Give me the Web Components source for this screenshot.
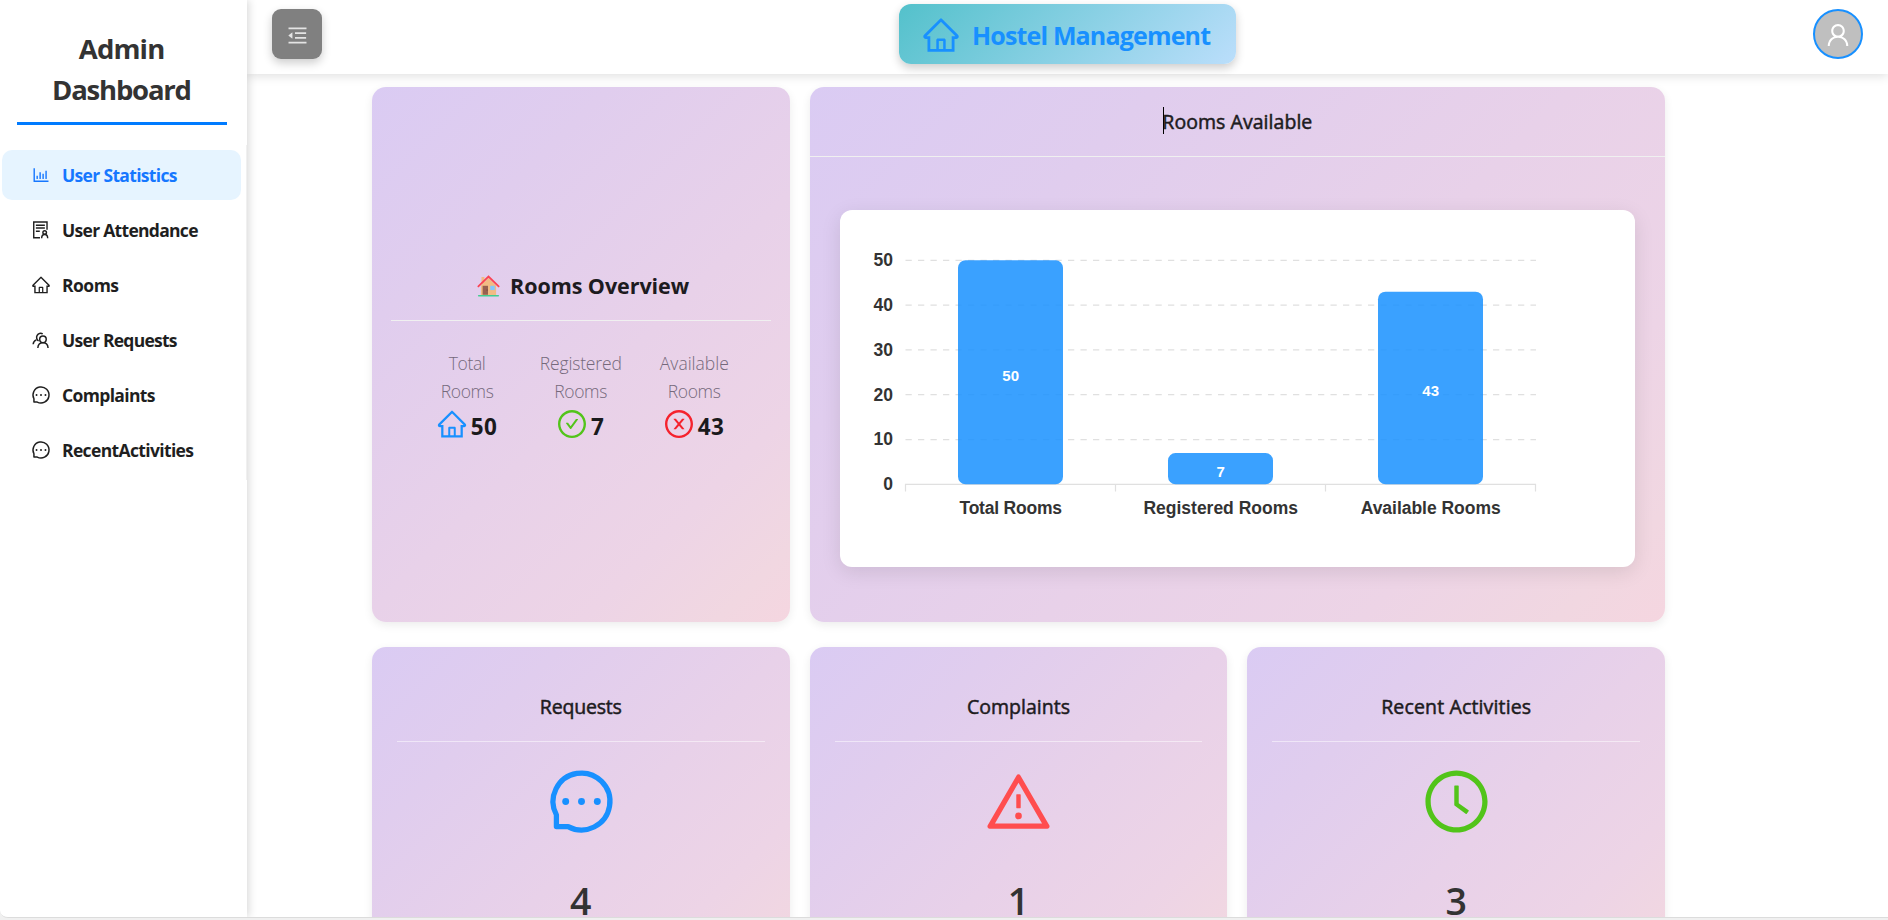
<!DOCTYPE html>
<html lang="en">
<head>
<meta charset="utf-8">
<title>Hostel Management</title>
<style>
html,body{margin:0;height:100%;overflow:hidden;background:#fff}
body{font-family:"Open Sans","Noto Sans",sans-serif;color:#1d1b20}
</style>
</head>
<body>
<hostel-app></hostel-app>
<script>
const ring='<path d="M512 64C264.6 64 64 264.6 64 512s200.6 448 448 448 448-200.6 448-448S759.4 64 512 64zm0 820c-205.4 0-372-166.6-372-372s166.6-372 372-372 372 166.6 372 372-166.6 372-372 372z"/>';
const ICONS={
home:'<path d="M946.5 505L560.1 118.8l-25.9-25.9a31.5 31.5 0 00-44.4 0L77.5 505a63.9 63.9 0 00-18.8 46c.4 35.2 29.7 63.3 64.9 63.3h42.5V940h691.8V614.3h43.4c17.1 0 33.2-6.7 45.3-18.8a63.6 63.6 0 0018.7-45.3c0-17-6.7-33.1-18.8-45.2zM568 868H456V664h112v204zm217.9-325.7V868H632V640c0-22.1-17.9-40-40-40H432c-22.1 0-40 17.9-40 40v228H238.1V542.3h-96l370-369.7 23.1 23.1L882 542.3h-96.1z"/>',
bars:'<path d="M888 792H200V168c0-4.4-3.6-8-8-8h-56c-4.4 0-8 3.6-8 8v688c0 4.4 3.6 8 8 8h752c4.4 0 8-3.6 8-8v-56c0-4.4-3.6-8-8-8zm-600-80h56c4.4 0 8-3.6 8-8V560c0-4.4-3.6-8-8-8h-56c-4.4 0-8 3.6-8 8v144c0 4.4 3.6 8 8 8zm152 0h56c4.4 0 8-3.6 8-8V384c0-4.4-3.6-8-8-8h-56c-4.4 0-8 3.6-8 8v320c0 4.4 3.6 8 8 8zm152 0h56c4.4 0 8-3.6 8-8V462c0-4.4-3.6-8-8-8h-56c-4.4 0-8 3.6-8 8v242c0 4.4 3.6 8 8 8zm152 0h56c4.4 0 8-3.6 8-8V304c0-4.4-3.6-8-8-8h-56c-4.4 0-8 3.6-8 8v400c0 4.4 3.6 8 8 8z"/>',
user:'<path d="M858.5 763.6a374 374 0 00-80.6-119.5 375.63 375.63 0 00-119.5-80.6c-.4-.2-.8-.3-1.2-.5C719.5 518 760 444.7 760 362c0-137-111-248-248-248S264 225 264 362c0 82.7 40.5 156 102.8 201.1-.4.2-.8.3-1.2.5-44.8 18.9-85 46-119.5 80.6a375.63 375.63 0 00-80.6 119.5A371.7 371.7 0 00136 901.8a8 8 0 008 8.2h60c4.4 0 7.9-3.5 8-7.8 2-77.2 33-149.5 87.8-204.3 56.7-56.7 132-87.9 212.2-87.9s155.5 31.2 212.2 87.9C779 752.7 810 825 812 902.2c.1 4.4 3.6 7.8 8 7.8h60a8 8 0 008-8.2c-1-47.8-10.9-94.3-29.5-138.2zM512 534c-45.9 0-89.1-17.9-121.6-50.4S340 407.9 340 362c0-45.9 17.9-89.1 50.4-121.6S466.1 190 512 190s89.1 17.9 121.6 50.4S684 316.1 684 362c0 45.9-17.9 89.1-50.4 121.6S557.9 534 512 534z"/>',
message:'<path fill="none" stroke="currentColor" stroke-width="76" stroke-linejoin="round" d="M150 705V874H319A410 410 0 1 0 150 705z"/><circle cx="284" cy="512" r="50"/><circle cx="512" cy="512" r="50"/><circle cx="740" cy="512" r="50"/>',
warning:'<path d="M464 720a48 48 0 1096 0 48 48 0 10-96 0zm16-304v184c0 4.4 3.6 8 8 8h48c4.4 0 8-3.6 8-8V416c0-4.4-3.6-8-8-8h-48c-4.4 0-8 3.6-8 8zm475.7 440l-416-720c-6.2-10.7-16.9-16-27.7-16s-21.6 5.3-27.7 16l-416 720C56 877.4 71.4 904 96 904h832c24.6 0 40-26.6 27.7-48zm-783.5-27.9L512 239.9l339.8 588.2H172.2z"/>',
clock:ring+'<path d="M686.7 638.6L544.1 535.5V288c0-4.4-3.6-8-8-8H488c-4.4 0-8 3.6-8 8v275.4c0 2.6 1.2 5 3.3 6.5l165.4 120.6c3.6 2.6 8.6 1.8 11.2-1.7l28.6-39c2.6-3.7 1.8-8.7-1.8-11.2z"/>',
check:ring+'<path d="M699 353h-46.9c-10.2 0-19.9 4.9-25.9 13.3L469 584.3l-71.2-98.8c-6-8.3-15.6-13.3-25.9-13.3H325c-6.5 0-10.3 7.4-6.5 12.7l124.6 172.8a31.8 31.8 0 0051.7 0l210.6-292c3.9-5.3.1-12.7-6.4-12.7z"/>',
close:ring+'<path d="M685.4 354.8c0-4.4-3.6-8-8-8l-66 .3L512 465.6l-99.3-118.4-66.1-.3c-4.4 0-8 3.5-8 8 0 1.9.7 3.7 1.9 5.2l130.1 155L340.5 670a8.32 8.32 0 00-1.9 5.2c0 4.4 3.6 8 8 8l66.1-.3L512 564.4l99.3 118.4 66 .3c4.4 0 8-3.5 8-8 0-1.9-.7-3.7-1.9-5.2L553.5 515l130.1-155c1.2-1.4 1.8-3.3 1.8-5.2z"/>',
fold:'<path d="M408 442h480c4.4 0 8-3.6 8-8v-56c0-4.4-3.6-8-8-8H408c-4.4 0-8 3.6-8 8v56c0 4.4 3.6 8 8 8zm-8 204c0 4.4 3.6 8 8 8h480c4.4 0 8-3.6 8-8v-56c0-4.4-3.6-8-8-8H408c-4.4 0-8 3.6-8 8v56zm504-486H120c-4.4 0-8 3.6-8 8v56c0 4.4 3.6 8 8 8h784c4.4 0 8-3.6 8-8v-56c0-4.4-3.6-8-8-8zm0 632H120c-4.4 0-8 3.6-8 8v56c0 4.4 3.6 8 8 8h784c4.4 0 8-3.6 8-8v-56c0-4.4-3.6-8-8-8zM115.4 518.9L271.7 642c5.8 4.6 14.4.5 14.4-6.9V388.9c0-7.4-8.5-11.5-14.4-6.9L115.4 505.1a8.74 8.74 0 000 13.8z"/>',
audit:'<g fill="none" stroke="currentColor" stroke-width="72"><path d="M460 912H140V100H820V500M250 270H710M250 412H710M250 575H450"/><circle cx="700" cy="640" r="92"/><path d="M546 930C546 680 854 680 854 930"/></g>',
team:'<g fill="none" stroke="currentColor" stroke-width="76"><circle cx="612" cy="478" r="168"/><path d="M350 920C372 570 852 570 874 920M390 560A180 180 0 1 1 600 200M110 730C120 610 180 540 270 505"/></g>',
house:'<path fill="#f2bb84" d="M200 90h130v300H200zM512 130L850 470V900H174V470z"/><path fill="#986050" d="M250 480h240v400H250z"/><path fill="#70433b" d="M430 650h40v50h-40z"/><path fill="#83c7ff" d="M590 480h200v190H590z"/><path fill="none" stroke="#fa4354" stroke-width="80" stroke-linecap="round" d="M60 510L512 70 964 510"/><rect x="40" y="890" width="944" height="70" rx="35" fill="#42cd91"/>'
};
const define=(name,css,html,ready)=>customElements.define(name,class extends HTMLElement{
  connectedCallback(){
    if(this.shadowRoot)return;
    const root=this.attachShadow({mode:'open'});
    root.innerHTML=`<style>*{box-sizing:border-box}${css}</style>${typeof html==='function'?html(this):html}`;
    if(ready)ready(this,root);
  }
});
const at=(el,n,d='')=>el.getAttribute(n)??d;

define('ui-icon',':host{display:block;flex:none;line-height:0}svg{display:block;fill:currentColor}',
 el=>`<svg width="${at(el,'size')}" height="${at(el,'size')}" viewBox="0 0 1024 1024" aria-hidden="true">${ICONS[at(el,'name')]}</svg>`);

/* One line of text, tracked so that it takes the width in its "w" attribute. */
define('fit-text',':host{display:block;white-space:nowrap;width:max-content}span{display:inline-block}','<span><slot></slot></span>',(el,root)=>{
  const s=root.querySelector('span'),w=+at(el,'w'),n=el.textContent.length;
  if(w&&n>1){const d=(w-s.getBoundingClientRect().width)/(n-1);s.style.letterSpacing=d+'px';s.style.marginRight=-d+'px';}
});

define('menu-item',`:host{display:flex;align-items:center;height:50px;margin:0 5px 5px 2px;padding-left:28.5px;gap:11.5px;border-radius:10px;font:700 17.5px/50px "Open Sans","Noto Sans",sans-serif;color:#1f1f1f}
:host([active]){background:#e6f4ff;color:#1677ff}`,
 el=>`<ui-icon name="${at(el,'icon')}" size="20"></ui-icon><fit-text w="${at(el,'w')}">${at(el,'label')}</fit-text>`);

define('side-bar',`:host{display:flex;flex-direction:column;background:#fff;box-shadow:2px 0 8px rgba(0,0,0,.15);position:relative;z-index:3}
header{margin:0 20px 0 17px;padding-top:28px;height:125px;border-bottom:3px solid #007bff;display:flex;flex-direction:column;align-items:center;font:700 27.5px/41px "Open Sans","Noto Sans",sans-serif;color:#333}
nav{margin-top:20px;padding-top:5px;height:335px;border-right:1px solid #f0f0f0}`,
`<header><fit-text w="86.5">Admin</fit-text><fit-text w="140">Dashboard</fit-text></header>
<nav><menu-item active icon="bars" label="User Statistics" w="115.5"></menu-item>
<menu-item icon="audit" label="User Attendance" w="136.5"></menu-item>
<menu-item icon="home" label="Rooms" w="57"></menu-item>
<menu-item icon="team" label="User Requests" w="115.5"></menu-item>
<menu-item icon="message" label="Complaints" w="93.5"></menu-item>
<menu-item icon="message" label="RecentActivities" w="132"></menu-item></nav>`);

define('top-bar',`:host{display:grid;flex:none;grid-template-columns:1fr 337px 1fr;height:74px;background:#fff;box-shadow:0 2px 10px rgba(0,0,0,.13);position:relative;z-index:2;padding:0 25px}
.b{width:50px;height:50px;margin-top:9px;display:grid;place-items:center}
.fold{background:#808080;color:#e4e4e4;border-radius:9px;box-shadow:0 4px 10px rgba(0,0,0,.2);padding-top:2px}
.brand{margin-top:4px;height:60px;border-radius:12px;background:linear-gradient(135deg,#53c1cb,#bbdefb);box-shadow:0 4px 10px rgba(0,0,0,.2);display:flex;align-items:center;padding-left:22px;gap:11px;color:#1890ff;font:700 25px/60px "Open Sans","Noto Sans",sans-serif}
.brand ui-icon{margin-top:2px}.brand fit-text{margin-top:1px}
.ava{border:2px solid #1890ff;border-radius:50%;background:#bfbfbf;color:#fff;justify-self:end;padding-top:2px}`,
`<div class="b fold"><ui-icon name="fold" size="23"></ui-icon></div>
<div class="brand"><ui-icon name="home" size="40"></ui-icon><fit-text w="239">Hostel Management</fit-text></div>
<div class="b ava"><ui-icon name="user" size="28"></ui-icon></div>`);

define('glass-card',`:host{display:block;border-radius:14px;background:linear-gradient(135deg,#dacbf3 0%,#e0cdee 25%,#e8d1e9 55%,#edd4e6 78%,#f1d7e1 92%,#f5d6e0 100%);box-shadow:0 3px 10px rgba(0,0,0,.08)}`,'<slot></slot>');

define('room-stat',`:host{display:flex;flex-direction:column;align-items:center;font:300 17.5px/28px "Open Sans","Noto Sans",sans-serif;color:#75697b}
div{display:flex;align-items:center;gap:3px;height:34px;margin:2px 2px 0 0;color:#1a1a1c;font:700 22.5px/34px "Open Sans","Noto Sans",sans-serif}
div fit-text{margin-top:6px}`,
 el=>`<fit-text w="${at(el,'w')}">${at(el,'label')}</fit-text><fit-text w="53">Rooms</fit-text><div><ui-icon name="${at(el,'icon')}" size="32" style="color:${at(el,'tint')}"></ui-icon><fit-text w="${at(el,'vw')}">${at(el,'value')}</fit-text></div>`);

define('rooms-overview',`:host{display:block;padding:176px 19px 0}
h2{margin:0;height:58px;padding-left:4px;display:flex;align-items:center;justify-content:center;gap:10.5px;border-bottom:1px solid #f0f0f0;font:700 21.5px/46px "Open Sans","Noto Sans",sans-serif}
h2 ui-icon{margin-top:-10px}h2 fit-text{margin-top:-12px}
.s{display:grid;grid-template-columns:repeat(3,113.5px);justify-content:center;padding-top:28px}`,
`<h2><ui-icon name="house" size="23"></ui-icon><fit-text w="179">Rooms Overview</fit-text></h2>
<div class="s"><room-stat label="Total" w="37" icon="home" tint="#1890ff" value="50" vw="26"></room-stat>
<room-stat label="Registered" w="82" icon="check" tint="#52c41a" value="7" vw="13"></room-stat>
<room-stat label="Available" w="69" icon="close" tint="#f5222d" value="43" vw="26"></room-stat></div>`);

const chart=()=>{
  const X=65.5,R=696,Y0=274.3,step=44.8;let s='';
  for(let i=0;i<=5;i++){const y=Y0-i*step;
    s+=i?`<path d="M${X} ${y}H${R}" stroke="#e0e0e0" stroke-width="1.25" stroke-dasharray="6.25 6.25"/>`:'';
    s+=`<text x="53" y="${y+5.8}" text-anchor="end">${i*10}</text>`;}
  s+=`<path d="M${X} 281.5V274.3H${R-.5}V281.5M275.5 274.3V281.5M485.5 274.3V281.5" fill="none" stroke="#e0e0e0" stroke-width="1.2"/>`;
  [['Total Rooms',50,102.5],['Registered Rooms',7,154.5],['Available Rooms',43,140]].forEach(([t,v,w],i)=>{
    const h=v*4.48,x=118+i*210;
    s+=`<rect x="${x}" y="${Y0-h}" width="105" height="${h}" rx="7.5" fill="#1890ff" fill-opacity=".85"/>
<text x="${x+52.7}" y="${Y0-h/2+8.5}" text-anchor="middle" style="font-size:15px;fill:#fff">${v}</text>
<text x="${x+52.7}" y="304" text-anchor="middle" textLength="${w}">${t}</text>`;});
  return s;
};
define('room-chart',`:host{display:block;background:#fff;border-radius:12px;box-shadow:0 5px 20px rgba(0,0,0,.1);height:357px;margin:53px 30px 0}
svg{display:block}text{font:700 17.5px "Liberation Sans",Arial,sans-serif;fill:#333}`,
 ()=>`<svg width="795" height="357">${chart()}</svg>`);

define('rooms-available',`:host{display:block}
h3{position:relative;margin:0;height:70px;display:flex;justify-content:center;border-bottom:1px solid #f0f0f0;font:500 19.5px/70px "Open Sans","Noto Sans",sans-serif;-webkit-text-stroke:.5px #1d1b20}
i{position:absolute;top:20px;left:353px;width:1px;height:27px;background:#000}`,
`<h3><i></i><fit-text w="150">Rooms Available</fit-text></h3><room-chart></room-chart>`);

define('count-card',`:host{display:flex;flex-direction:column;align-items:center;padding:25px 25px 0}
h3{margin:0;align-self:stretch;height:70px;display:flex;justify-content:center;border-bottom:1px solid rgba(255,255,255,.5);font:500 19.5px/70px "Open Sans","Noto Sans",sans-serif;-webkit-text-stroke:.5px #1d1b20}
ui-icon{margin:24px 0 0 1px}
b{font:600 37.5px/30px "Open Sans","Noto Sans",sans-serif;color:#333;margin-top:49px;height:30px}`,
 el=>`<h3><fit-text w="${at(el,'w')}">${at(el,'label')}</fit-text></h3><ui-icon name="${at(el,'icon')}" size="71" style="color:${at(el,'tint')}"></ui-icon><b>${at(el,'value')}</b>`);

define('hostel-app',`:host{display:block;height:920px;background:#f0f0f0;overflow:hidden}
.win{display:grid;grid-template-columns:247px 1fr;grid-template-rows:917px;height:918px;background:#fff;border-bottom:1px solid #dcdcdc;border-radius:0 0 0 8px;overflow:hidden}
main{display:flex;flex-direction:column;min-height:0}
.grid{display:grid;flex:none;grid-template-columns:repeat(3,1fr);grid-template-rows:535px 340px;gap:25px 20px;width:1293px;margin:13px 0 0 125px}
.wide{grid-column:span 2}`,
`<div class="win"><side-bar></side-bar><main><top-bar></top-bar><div class="grid">
<glass-card><rooms-overview></rooms-overview></glass-card>
<glass-card class="wide"><rooms-available></rooms-available></glass-card>
<glass-card><count-card label="Requests" w="82" icon="message" tint="#1890ff" value="4"></count-card></glass-card>
<glass-card><count-card label="Complaints" w="103" icon="warning" tint="#ff4d4f" value="1"></count-card></glass-card>
<glass-card><count-card label="Recent Activities" w="150" icon="clock" tint="#52c41a" value="3"></count-card></glass-card>
</div></main></div>`);
</script>
</body>
</html>
